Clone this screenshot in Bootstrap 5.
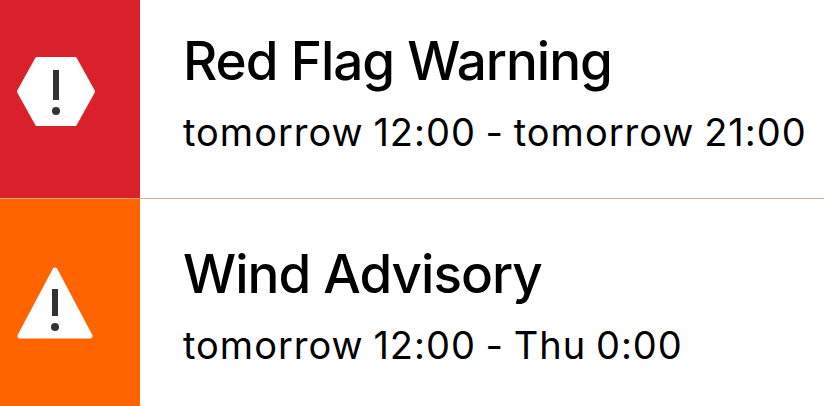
<!DOCTYPE html>
<html lang="en">
<head>
    <meta charset="UTF-8">
    <meta name="viewport" content="width=device-width, initial-scale=1">
    <title>Weather alerts</title>
    <link href="https://cdn.jsdelivr.net/npm/bootstrap@5.3.0/dist/css/bootstrap.min.css" rel="stylesheet">
    <style>
        body { overflow: hidden; background: #fff; font-family: Inter, "Noto Sans", sans-serif; color: #000; }
        .alert-row { height: 198px; }
        .alert-row + .alert-row { height: 208px; border-top: 1px solid #dfa77c; }
        .alert-tile { width: 140px; padding-left: 17px; }
        .tile-red { background: #da212b; padding-bottom: 16px; }
        .tile-orange { background: #ff6400; }
        .alert-body { padding-left: 43px; padding-top: 31px; }
        .alert-row + .alert-row .alert-body { padding-top: 45px; }
        .alert-name { font-size: 53px; line-height: 60px; font-weight: 500; letter-spacing: -1px; }
        .alert-time { font-size: 38px; line-height: 46px; margin-top: 18px; letter-spacing: 1px; word-spacing: -2px; }
    </style>
</head>
<body>
<div class="d-flex alert-row">
    <div class="alert-tile tile-red d-flex align-items-center">
        <svg width="78" height="69" viewBox="0 0 78 69">
            <path d="M20 2 H58 L76 34.500 L58 67 H20 L2 34.500 Z" fill="#fff" stroke="#fff" stroke-linejoin="round" stroke-width="4"/>
            <rect x="36" y="13" width="6" height="30" fill="#333"/>
            <circle cx="39" cy="54" r="4" fill="#333"/>
        </svg>
    </div>
    <div class="alert-body">
        <div class="alert-name">Red Flag Warning</div>
        <div class="alert-time">tomorrow 12:00 - tomorrow 21:00</div>
    </div>
</div>
<div class="d-flex alert-row">
    <div class="alert-tile tile-orange d-flex align-items-center">
        <svg width="76" height="72" viewBox="0 0 76 72">
            <path d="M38 3 L73 69 H3 Z" fill="#fff" stroke="#fff" stroke-linejoin="round" stroke-width="5"/>
            <rect x="35" y="22" width="6" height="27" fill="#333"/>
            <circle cx="38" cy="60" r="4" fill="#333"/>
        </svg>
    </div>
    <div class="alert-body">
        <div class="alert-name">Wind Advisory</div>
        <div class="alert-time">tomorrow 12:00 - Thu 0:00</div>
    </div>
</div>
<script src="https://cdn.jsdelivr.net/npm/bootstrap@5.3.0/dist/js/bootstrap.bundle.min.js"></script>
</body>
</html>
